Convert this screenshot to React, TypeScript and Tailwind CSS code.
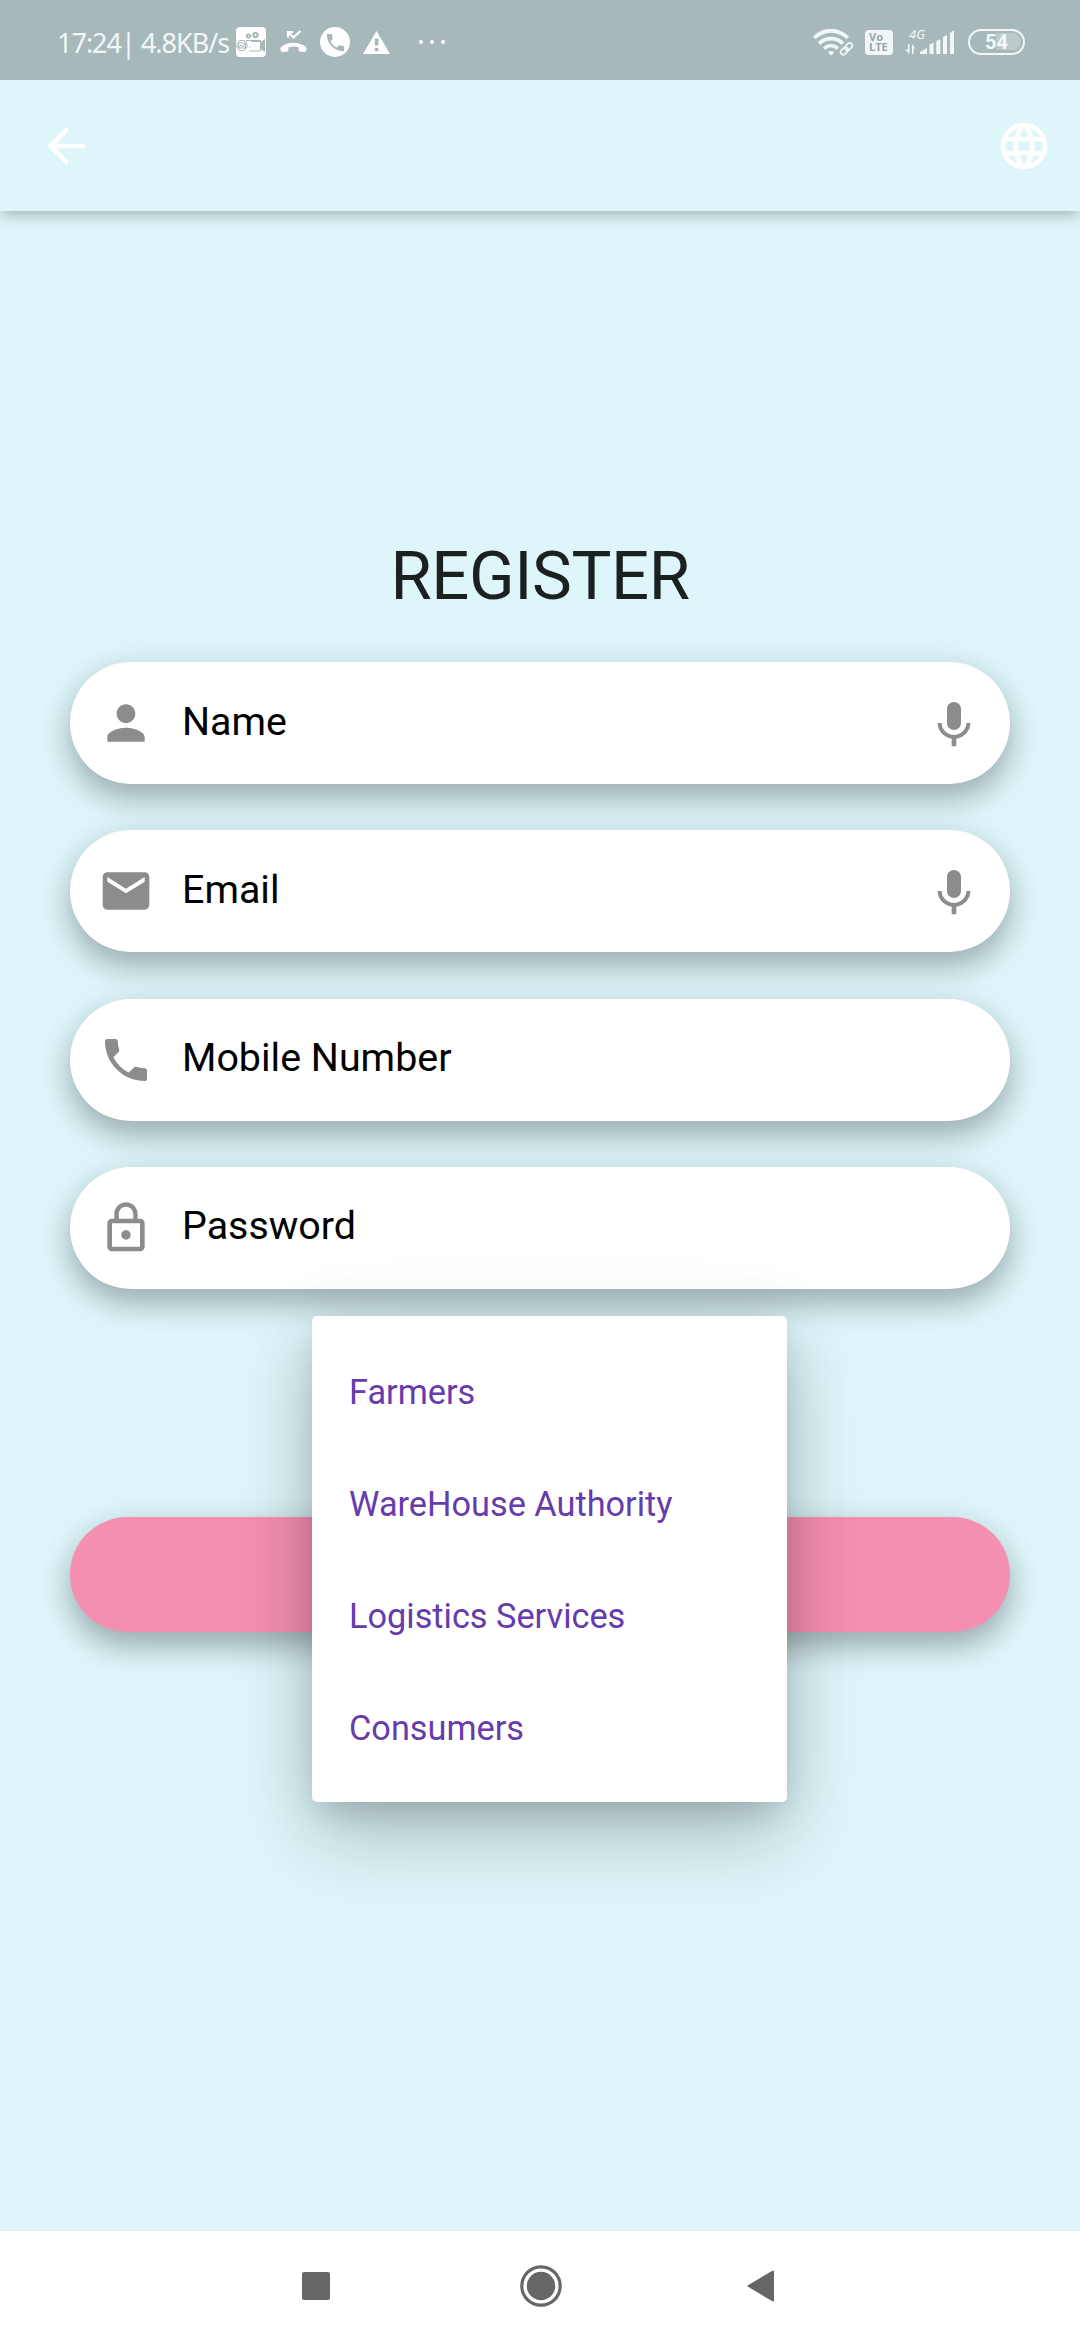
import type { ReactNode } from "react";
import type { IconType } from "react-icons";
import {
  MdArrowBack,
  MdEmail,
  MdKeyboardVoice,
  MdLanguage,
  MdLockOutline,
  MdPerson,
  MdPhone,
  MdPhoneMissed,
} from "react-icons/md";

const roles = ["Farmers", "WareHouse Authority", "Logistics Services", "Consumers"];

const fields: { label: string; icon: IconType; voice: boolean }[] = [
  { label: "Name", icon: MdPerson, voice: true },
  { label: "Email", icon: MdEmail, voice: true },
  { label: "Mobile Number", icon: MdPhone, voice: false },
  { label: "Password", icon: MdLockOutline, voice: false },
];

function CamcorderIcon() {
  return (
    <svg width="30" height="30" viewBox="0 0 30 30" className="shrink-0">
      <rect width="30" height="30" rx="4" fill="#fff" />
      <g fill="none" stroke="#a7b8ba" strokeWidth="1">
        <circle cx="12.5" cy="9" r="2.2" fill="#a7b8ba" />
        <circle cx="19.5" cy="8" r="2.8" fill="#a7b8ba" />
        <path d="M10 13.5h14.500v10.500H13" />
        <path d="M24.500 16l4-3.500v12l-4-3.500" fill="#a7b8ba" />
        <circle cx="6" cy="18.500" r="5.200" />
        <path d="M2.500 16h7v5h-7zM3 20l2-2 2 2 2-3" />
        <path d="M13 20h1.500M15 14.500h9" />
      </g>
      <circle cx="19.500" cy="8" r="1" fill="#fff" />
      <circle cx="12.500" cy="9" r=".7" fill="#fff" />
    </svg>
  );
}

function CallBadgeIcon() {
  return (
    <span className="flex size-[30px] items-center justify-center rounded-full bg-white text-[#a7b8ba]">
      <MdPhone size={23} />
    </span>
  );
}

function MissedCallIcon() {
  return (
    <svg width="27" height="24" viewBox="0 0 27 24" fill="none" stroke="#fff">
      <path d="M8 7.500V2h5M8.500 2.500l5 5L20.500 1" strokeWidth="2.200" />
      <path
        d="M.8 20.500c-.8-1-.5-2.700.7-3.900 6.500-5.200 17.500-5.200 24 0 1.200 1.200 1.500 2.900.7 3.900-.5 1.200-1.200 1.900-2.300 1.600l-4-.7c-1-.3-1.300-1-1.300-2v-2.200c-3.300-1-6.900-1-10.200 0v2.200c0 1-.3 1.700-1.300 2l-4 .7c-1.100.3-1.800-.4-2.300-1.600z"
        fill="#fff"
        stroke="none"
      />
    </svg>
  );
}

function WarningIcon() {
  return (
    <svg width="27" height="23" viewBox="0 0 27 23">
      <path d="M13.500 0L27 23H0z" fill="#fff" />
      <path d="M11.800 7.500h3.600v7h-3.600zM11.800 17h3.600v3.300h-3.600z" fill="#a7b8ba" />
    </svg>
  );
}

function WifiIcon() {
  return (
    <svg width="41" height="27" viewBox="0 0 41 27" fill="none" stroke="#f1f7f7">
      <path d="M1.200 9C11-.7 25-.7 34.800 9" strokeWidth="3.800" />
      <path d="M6 14.600c7-6.600 17-6.600 24 0" strokeWidth="3.600" />
      <path d="M11 19.600c4.200-3.900 9.800-3.900 14 0" strokeWidth="3.400" />
      <path d="M14.800 23.200c1.800-1.700 4.600-1.700 6.400 0L18 26.400z" fill="#f1f7f7" stroke="none" />
      <g stroke="#a7b8ba" strokeWidth="4">
        <path d="M29 24l9-9" />
      </g>
      <g strokeWidth="1.700" transform="rotate(-45 33.500 19.800)">
        <rect x="26.300" y="17.200" width="8.300" height="5.200" rx="2.600" />
        <rect x="32.400" y="17.200" width="8.300" height="5.200" rx="2.600" />
      </g>
    </svg>
  );
}

function SignalIcon() {
  return (
    <svg width="50" height="38" viewBox="0 -6 50 38" fill="#f1f7f7">
      <text x="4" y="9.500" fontFamily="Noto Sans, sans-serif" fontSize="13" fontStyle="italic">
        4G
      </text>
      <path d="M3 15h1.500v10L0 20.500h3zM7 25V15l3.500 4.500H8.500V25z" />
      <path d="M15 25v-2l7-4v6zM24.500 25v-9.500l4-2V25zM31.300 25V12l4-2v15zM38 25V8l4-2v19zM45 25V4l4-3v24z" />
    </svg>
  );
}

function StatusBar() {
  return (
    <header className="relative z-10 flex h-20 items-center bg-[#a7b8ba] pt-1 pl-[57px]">
      <span className="w-[179px] font-['Noto_Sans',sans-serif] text-[27px] leading-none tracking-[-1px] whitespace-nowrap text-[#f1f7f7]">
        17:24| 4.8KB/s
      </span>
      <CamcorderIcon />
      <span className="ml-[14px]">
        <MissedCallIcon />
      </span>
      <span className="ml-[13px]">
        <CallBadgeIcon />
      </span>
      <span className="ml-[13px]">
        <WarningIcon />
      </span>
      <span className="ml-[29px] flex gap-[7px]">
        <i className="size-1 rounded-full bg-white" />
        <i className="size-1 rounded-full bg-white" />
        <i className="size-1 rounded-full bg-white" />
      </span>
      <span className="ml-auto">
        <WifiIcon />
      </span>
      <span className="ml-[11px] flex h-[25px] w-7 flex-col justify-center rounded-[4px] bg-[#f1f7f7] pl-1 font-['Open_Sans',sans-serif] text-[11px] leading-[10.500px] font-bold text-[#93a6a8]">
        <span>Vo</span>
        <span>LTE</span>
      </span>
      <span className="ml-3">
        <SignalIcon />
      </span>
      <span className="relative mr-[55px] ml-[13px] flex h-[26px] w-[57px] items-center justify-center rounded-full border-[2.500px] border-[#f1f7f7]">
        <i className="absolute top-[2px] right-[2px] h-[17px] w-[25px] rounded-r-full bg-[#bccacb]" />
        <b className="relative font-['Roboto',sans-serif] text-[20px] leading-none text-[#f4f9f9]">54</b>
      </span>
    </header>
  );
}

function Pill({ children }: { children: ReactNode }) {
  return (
    <div className="flex h-[122px] items-center rounded-full bg-white pr-[28px] pl-[28px] shadow-[0_15px_30px_rgba(0,0,0,0.27),0_2px_40px_rgba(0,0,0,0.06)]">
      {children}
    </div>
  );
}

export default function App() {
  return (
    <div className="flex h-[2340px] w-[1080px] flex-col overflow-hidden bg-[#def6f9] font-['Roboto',sans-serif]">
      <StatusBar />
      <nav className="flex h-[131px] items-center justify-between pr-[28px] pl-[38px] text-white shadow-[0_4px_14px_rgba(0,0,0,0.27)]">
        <MdArrowBack size={56} />
        <MdLanguage size={56} />
      </nav>

      <main className="relative grow px-[70px] pt-[325px]">
        <h1 className="mb-[46px] text-center text-[67px] leading-[80px] tracking-[-0.400px] text-[#1b2021]">
          REGISTER
        </h1>
        <form className="flex flex-col gap-[46.300px]">
          {fields.map(({ label, icon: Icon, voice }) => (
            <Pill key={label}>
              <Icon size={56} className="text-[#8c8c8c]" />
              <span className="ml-[28px] grow pb-[3px] text-[39.400px] leading-[46px] text-black">{label}</span>
              {voice && <MdKeyboardVoice size={56} className="text-[#8c8c8c]" />}
            </Pill>
          ))}
        </form>
        <button
          type="button"
          aria-label="Register"
          className="mt-[228.500px] block h-[115px] w-full rounded-full bg-[#f58fb1] shadow-[0_15px_30px_rgba(0,0,0,0.28),0_2px_40px_rgba(0,0,0,0.06)]"
        />
        <ul className="absolute top-[1105px] left-[312px] flex h-[486px] w-[475px] flex-col rounded-[5px] bg-white px-[37px] pt-[20.500px] pb-[17px] text-[34.300px] text-[#663bab] shadow-[0_36px_80px_rgba(0,0,0,0.2),0_16px_30px_-8px_rgba(0,0,0,0.14),0_0_70px_rgba(0,0,0,0.08)]">
          {roles.map((role) => (
            <li key={role} className="flex flex-1 items-center">
              {role}
            </li>
          ))}
        </ul>
      </main>

      <footer className="relative flex h-[110px] shrink-0 items-center border-t border-[#dfe6e6] bg-white pl-[302px]">
        <i className="size-7 rounded-[2px] bg-[#666]" />
        <svg width="42" height="42" viewBox="0 0 42 42" className="ml-[190px]">
          <circle cx="21" cy="21" r="19.200" fill="none" stroke="#666" strokeWidth="3.200" />
          <circle cx="21" cy="21" r="14.200" fill="#666" />
        </svg>
        <svg width="28" height="32" viewBox="0 0 28 32" className="ml-[185px]">
          <path d="M1.500 16L26 1.500v29z" fill="#666" stroke="#666" strokeWidth="2" strokeLinejoin="round" />
        </svg>
      </footer>
    </div>
  );
}
